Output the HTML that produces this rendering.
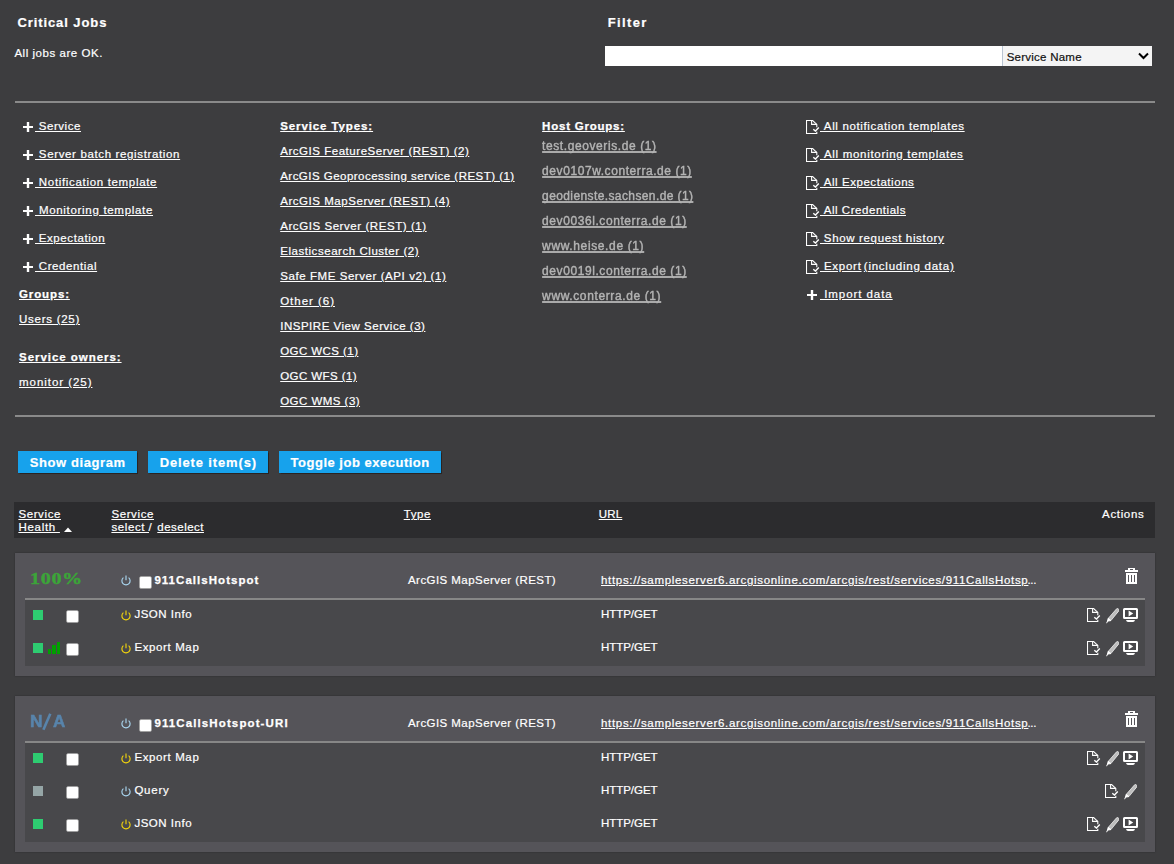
<!DOCTYPE html>
<html><head><meta charset="utf-8"><title>Dashboard</title>
<style>
html,body{margin:0;padding:0;}
body{width:1174px;height:864px;background:#3d3d3f;position:relative;overflow:hidden;font-family:"Liberation Sans",sans-serif;}
.t{position:absolute;white-space:pre;}
.r{position:absolute;display:block;}
</style></head><body>
<div class=r style='left:605px;top:46px;width:397px;height:20px;background:#fff;'></div><div class=r style='left:1002px;top:46px;width:150px;height:20px;background:#f4f4f4;box-shadow:inset 1px 0 0 #b9c4d2;'></div><div class=r style='left:15px;top:101px;width:1140px;height:2px;background:#8a8a8a;'></div><div class=r style='left:15px;top:415px;width:1140px;height:2px;background:#8a8a8a;'></div><div class=r style='left:18px;top:451px;width:119px;height:22px;background:#17a2ec;box-shadow:0 0 1px 0.5px rgba(30,20,15,.6);'></div><div class=r style='left:148px;top:451px;width:120px;height:22px;background:#17a2ec;box-shadow:0 0 1px 0.5px rgba(30,20,15,.6);'></div><div class=r style='left:279px;top:451px;width:162px;height:22px;background:#17a2ec;box-shadow:0 0 1px 0.5px rgba(30,20,15,.6);'></div><div class=r style='left:14px;top:502px;width:1141px;height:36px;background:#2c2c2e;'></div><div class=r style='left:15px;top:553px;width:1140px;height:123px;background:#555459;box-shadow:0 0 1.5px rgba(0,0,0,.35);'></div><div class=r style='left:25px;top:598px;width:1120px;height:2px;background:#878787;'></div><div class=r style='left:25px;top:600px;width:1120px;height:66px;background:#48484b;'></div><div class=r style='left:15px;top:696px;width:1140px;height:156px;background:#555459;box-shadow:0 0 1.5px rgba(0,0,0,.35);'></div><div class=r style='left:25px;top:741px;width:1120px;height:2px;background:#878787;'></div><div class=r style='left:25px;top:743px;width:1120px;height:99px;background:#48484b;'></div><div class=r style='left:33px;top:610px;width:10px;height:10px;background:#2ecc71;'></div><div class=r style='left:33px;top:643px;width:10px;height:10px;background:#2ecc71;'></div><div class=r style='left:48px;top:649px;width:3px;height:5px;background:#00a000;'></div><div class=r style='left:52px;top:645px;width:3.5px;height:9px;background:#00a000;'></div><div class=r style='left:57px;top:642px;width:3px;height:12px;background:#00a000;'></div><div class=r style='left:33px;top:753px;width:10px;height:10px;background:#2ecc71;'></div><div class=r style='left:33px;top:786px;width:10px;height:10px;background:#95a5a6;'></div><div class=r style='left:33px;top:819px;width:10px;height:10px;background:#2ecc71;'></div>
<svg class=r style='left:40px;top:713px' width='14' height='18' viewBox='0 0 14 18'><path d='M10.3,0.7L3.4,16.8' stroke='#5884ab' stroke-width='2.6'/></svg><svg class=r style='left:23px;top:122px' width='10' height='10' viewBox='0 0 10 10'><rect x='0' y='4' width='10' height='2' fill='#fff'/><rect x='3.8' y='0' width='2.4' height='10' fill='#fff'/></svg><svg class=r style='left:23px;top:150px' width='10' height='10' viewBox='0 0 10 10'><rect x='0' y='4' width='10' height='2' fill='#fff'/><rect x='3.8' y='0' width='2.4' height='10' fill='#fff'/></svg><svg class=r style='left:23px;top:178px' width='10' height='10' viewBox='0 0 10 10'><rect x='0' y='4' width='10' height='2' fill='#fff'/><rect x='3.8' y='0' width='2.4' height='10' fill='#fff'/></svg><svg class=r style='left:23px;top:206px' width='10' height='10' viewBox='0 0 10 10'><rect x='0' y='4' width='10' height='2' fill='#fff'/><rect x='3.8' y='0' width='2.4' height='10' fill='#fff'/></svg><svg class=r style='left:23px;top:234px' width='10' height='10' viewBox='0 0 10 10'><rect x='0' y='4' width='10' height='2' fill='#fff'/><rect x='3.8' y='0' width='2.4' height='10' fill='#fff'/></svg><svg class=r style='left:23px;top:262px' width='10' height='10' viewBox='0 0 10 10'><rect x='0' y='4' width='10' height='2' fill='#fff'/><rect x='3.8' y='0' width='2.4' height='10' fill='#fff'/></svg><svg class=r style='left:807px;top:290px' width='10' height='10' viewBox='0 0 10 10'><rect x='0' y='4' width='10' height='2' fill='#fff'/><rect x='3.8' y='0' width='2.4' height='10' fill='#fff'/></svg><svg class=r style='left:806px;top:120px' width='14' height='14' viewBox='0 0 14 14'><path d='M10.8,7.2V4.4L6.6,0.5H0.5V13.5H10.8V11.8' fill='none' stroke='#fff' stroke-width='1.1'/><path d='M5.6,0.5V4.4H10.8' fill='none' stroke='#fff' stroke-width='1.1'/><path d='M7.3,9.3L9.4,11.1L12.8,7.6' fill='none' stroke='#fff' stroke-width='1.4'/></svg><svg class=r style='left:806px;top:148px' width='14' height='14' viewBox='0 0 14 14'><path d='M10.8,7.2V4.4L6.6,0.5H0.5V13.5H10.8V11.8' fill='none' stroke='#fff' stroke-width='1.1'/><path d='M5.6,0.5V4.4H10.8' fill='none' stroke='#fff' stroke-width='1.1'/><path d='M7.3,9.3L9.4,11.1L12.8,7.6' fill='none' stroke='#fff' stroke-width='1.4'/></svg><svg class=r style='left:806px;top:176px' width='14' height='14' viewBox='0 0 14 14'><path d='M10.8,7.2V4.4L6.6,0.5H0.5V13.5H10.8V11.8' fill='none' stroke='#fff' stroke-width='1.1'/><path d='M5.6,0.5V4.4H10.8' fill='none' stroke='#fff' stroke-width='1.1'/><path d='M7.3,9.3L9.4,11.1L12.8,7.6' fill='none' stroke='#fff' stroke-width='1.4'/></svg><svg class=r style='left:806px;top:204px' width='14' height='14' viewBox='0 0 14 14'><path d='M10.8,7.2V4.4L6.6,0.5H0.5V13.5H10.8V11.8' fill='none' stroke='#fff' stroke-width='1.1'/><path d='M5.6,0.5V4.4H10.8' fill='none' stroke='#fff' stroke-width='1.1'/><path d='M7.3,9.3L9.4,11.1L12.8,7.6' fill='none' stroke='#fff' stroke-width='1.4'/></svg><svg class=r style='left:806px;top:232px' width='14' height='14' viewBox='0 0 14 14'><path d='M10.8,7.2V4.4L6.6,0.5H0.5V13.5H10.8V11.8' fill='none' stroke='#fff' stroke-width='1.1'/><path d='M5.6,0.5V4.4H10.8' fill='none' stroke='#fff' stroke-width='1.1'/><path d='M7.3,9.3L9.4,11.1L12.8,7.6' fill='none' stroke='#fff' stroke-width='1.4'/></svg><svg class=r style='left:806px;top:260px' width='14' height='14' viewBox='0 0 14 14'><path d='M10.8,7.2V4.4L6.6,0.5H0.5V13.5H10.8V11.8' fill='none' stroke='#fff' stroke-width='1.1'/><path d='M5.6,0.5V4.4H10.8' fill='none' stroke='#fff' stroke-width='1.1'/><path d='M7.3,9.3L9.4,11.1L12.8,7.6' fill='none' stroke='#fff' stroke-width='1.4'/></svg><svg class=r style='left:1125px;top:568px' width='13' height='16' viewBox='0 0 13 16'><path fill-rule='evenodd' fill='#fff' d='M3,0H10V2H13V4H0V2H3ZM5,1V2H8V1ZM1,5H12V16H1ZM3,7V14H4V7ZM6,7V14H7V7ZM9,7V14H10V7Z'/></svg><svg class=r style='left:121px;top:575px' width='10' height='11' viewBox='0 0 10 11'><path d='M2.4,2.6A4.1,4.1 0 1 0 7.6,2.6' fill='none' stroke='#a9d6f0' stroke-width='1.15'/><path d='M5,0.4V5.2' stroke='#a9d6f0' stroke-width='1.15'/></svg><svg class=r style='left:139px;top:576px' width='13' height='13' viewBox='0 0 13 13'><rect x='0.5' y='0.5' width='12' height='12' rx='1.5' fill='#fff' stroke='#9a9a9a' stroke-width='0.6'/></svg><svg class=r style='left:66px;top:610px' width='13' height='13' viewBox='0 0 13 13'><rect x='0.5' y='0.5' width='12' height='12' rx='1.5' fill='#fff' stroke='#9a9a9a' stroke-width='0.6'/></svg><svg class=r style='left:121px;top:609.8px' width='10' height='11' viewBox='0 0 10 11'><path d='M2.4,2.6A4.1,4.1 0 1 0 7.6,2.6' fill='none' stroke='#f2d40c' stroke-width='1.15'/><path d='M5,0.4V5.2' stroke='#f2d40c' stroke-width='1.15'/></svg><svg class=r style='left:1087px;top:608px' width='14' height='14' viewBox='0 0 14 14'><path d='M10.8,7.2V4.4L6.6,0.5H0.5V13.5H10.8V11.8' fill='none' stroke='#fff' stroke-width='1.1'/><path d='M5.6,0.5V4.4H10.8' fill='none' stroke='#fff' stroke-width='1.1'/><path d='M7.3,9.3L9.4,11.1L12.8,7.6' fill='none' stroke='#fff' stroke-width='1.4'/></svg><svg class=r style='left:1105.5px;top:608px' width='13' height='16' viewBox='0 0 13 16'><path d='M4.9,12.6L2.2,10.4L10.6,0.8Q11.4,0.1 12.3,0.8L12.9,1.4Q13.4,2.2 12.8,2.9Z' fill='#bdbdbd' stroke='#fff' stroke-width='0.7'/><path d='M4.9,12.6L2.2,10.4L1.4,13.2Z' fill='#fff' stroke='#fff' stroke-width='0.9'/><path d='M1.6,13L0.6,15.2' stroke='#fff' stroke-width='1'/></svg><svg class=r style='left:1123px;top:608px' width='15' height='14' viewBox='0 0 15 14'><path fill-rule='evenodd' fill='#fff' d='M1.5,0H13.5Q15,0 15,1.5V9.5Q15,11 13.5,11H1.5Q0,11 0,9.5V1.5Q0,0 1.5,0ZM2,2V9H13V2Z'/><path d='M5.6,2.6L10.2,5.5L5.6,8.6Z' fill='#fff'/><path d='M3,12H12Q11.5,14 10,14H5Q3.5,14 3,12Z' fill='#fff'/></svg><svg class=r style='left:66px;top:643px' width='13' height='13' viewBox='0 0 13 13'><rect x='0.5' y='0.5' width='12' height='12' rx='1.5' fill='#fff' stroke='#9a9a9a' stroke-width='0.6'/></svg><svg class=r style='left:121px;top:642.8px' width='10' height='11' viewBox='0 0 10 11'><path d='M2.4,2.6A4.1,4.1 0 1 0 7.6,2.6' fill='none' stroke='#f2d40c' stroke-width='1.15'/><path d='M5,0.4V5.2' stroke='#f2d40c' stroke-width='1.15'/></svg><svg class=r style='left:1087px;top:641px' width='14' height='14' viewBox='0 0 14 14'><path d='M10.8,7.2V4.4L6.6,0.5H0.5V13.5H10.8V11.8' fill='none' stroke='#fff' stroke-width='1.1'/><path d='M5.6,0.5V4.4H10.8' fill='none' stroke='#fff' stroke-width='1.1'/><path d='M7.3,9.3L9.4,11.1L12.8,7.6' fill='none' stroke='#fff' stroke-width='1.4'/></svg><svg class=r style='left:1105.5px;top:641px' width='13' height='16' viewBox='0 0 13 16'><path d='M4.9,12.6L2.2,10.4L10.6,0.8Q11.4,0.1 12.3,0.8L12.9,1.4Q13.4,2.2 12.8,2.9Z' fill='#bdbdbd' stroke='#fff' stroke-width='0.7'/><path d='M4.9,12.6L2.2,10.4L1.4,13.2Z' fill='#fff' stroke='#fff' stroke-width='0.9'/><path d='M1.6,13L0.6,15.2' stroke='#fff' stroke-width='1'/></svg><svg class=r style='left:1123px;top:641px' width='15' height='14' viewBox='0 0 15 14'><path fill-rule='evenodd' fill='#fff' d='M1.5,0H13.5Q15,0 15,1.5V9.5Q15,11 13.5,11H1.5Q0,11 0,9.5V1.5Q0,0 1.5,0ZM2,2V9H13V2Z'/><path d='M5.6,2.6L10.2,5.5L5.6,8.6Z' fill='#fff'/><path d='M3,12H12Q11.5,14 10,14H5Q3.5,14 3,12Z' fill='#fff'/></svg><svg class=r style='left:1125px;top:711px' width='13' height='16' viewBox='0 0 13 16'><path fill-rule='evenodd' fill='#fff' d='M3,0H10V2H13V4H0V2H3ZM5,1V2H8V1ZM1,5H12V16H1ZM3,7V14H4V7ZM6,7V14H7V7ZM9,7V14H10V7Z'/></svg><svg class=r style='left:121px;top:718px' width='10' height='11' viewBox='0 0 10 11'><path d='M2.4,2.6A4.1,4.1 0 1 0 7.6,2.6' fill='none' stroke='#a9d6f0' stroke-width='1.15'/><path d='M5,0.4V5.2' stroke='#a9d6f0' stroke-width='1.15'/></svg><svg class=r style='left:139px;top:719px' width='13' height='13' viewBox='0 0 13 13'><rect x='0.5' y='0.5' width='12' height='12' rx='1.5' fill='#fff' stroke='#9a9a9a' stroke-width='0.6'/></svg><svg class=r style='left:66px;top:753px' width='13' height='13' viewBox='0 0 13 13'><rect x='0.5' y='0.5' width='12' height='12' rx='1.5' fill='#fff' stroke='#9a9a9a' stroke-width='0.6'/></svg><svg class=r style='left:121px;top:752.8px' width='10' height='11' viewBox='0 0 10 11'><path d='M2.4,2.6A4.1,4.1 0 1 0 7.6,2.6' fill='none' stroke='#f2d40c' stroke-width='1.15'/><path d='M5,0.4V5.2' stroke='#f2d40c' stroke-width='1.15'/></svg><svg class=r style='left:1087px;top:751px' width='14' height='14' viewBox='0 0 14 14'><path d='M10.8,7.2V4.4L6.6,0.5H0.5V13.5H10.8V11.8' fill='none' stroke='#fff' stroke-width='1.1'/><path d='M5.6,0.5V4.4H10.8' fill='none' stroke='#fff' stroke-width='1.1'/><path d='M7.3,9.3L9.4,11.1L12.8,7.6' fill='none' stroke='#fff' stroke-width='1.4'/></svg><svg class=r style='left:1105.5px;top:751px' width='13' height='16' viewBox='0 0 13 16'><path d='M4.9,12.6L2.2,10.4L10.6,0.8Q11.4,0.1 12.3,0.8L12.9,1.4Q13.4,2.2 12.8,2.9Z' fill='#bdbdbd' stroke='#fff' stroke-width='0.7'/><path d='M4.9,12.6L2.2,10.4L1.4,13.2Z' fill='#fff' stroke='#fff' stroke-width='0.9'/><path d='M1.6,13L0.6,15.2' stroke='#fff' stroke-width='1'/></svg><svg class=r style='left:1123px;top:751px' width='15' height='14' viewBox='0 0 15 14'><path fill-rule='evenodd' fill='#fff' d='M1.5,0H13.5Q15,0 15,1.5V9.5Q15,11 13.5,11H1.5Q0,11 0,9.5V1.5Q0,0 1.5,0ZM2,2V9H13V2Z'/><path d='M5.6,2.6L10.2,5.5L5.6,8.6Z' fill='#fff'/><path d='M3,12H12Q11.5,14 10,14H5Q3.5,14 3,12Z' fill='#fff'/></svg><svg class=r style='left:66px;top:786px' width='13' height='13' viewBox='0 0 13 13'><rect x='0.5' y='0.5' width='12' height='12' rx='1.5' fill='#fff' stroke='#9a9a9a' stroke-width='0.6'/></svg><svg class=r style='left:121px;top:785.8px' width='10' height='11' viewBox='0 0 10 11'><path d='M2.4,2.6A4.1,4.1 0 1 0 7.6,2.6' fill='none' stroke='#a9d6f0' stroke-width='1.15'/><path d='M5,0.4V5.2' stroke='#a9d6f0' stroke-width='1.15'/></svg><svg class=r style='left:1105px;top:784px' width='14' height='14' viewBox='0 0 14 14'><path d='M10.8,7.2V4.4L6.6,0.5H0.5V13.5H10.8V11.8' fill='none' stroke='#fff' stroke-width='1.1'/><path d='M5.6,0.5V4.4H10.8' fill='none' stroke='#fff' stroke-width='1.1'/><path d='M7.3,9.3L9.4,11.1L12.8,7.6' fill='none' stroke='#fff' stroke-width='1.4'/></svg><svg class=r style='left:1123.5px;top:784px' width='13' height='16' viewBox='0 0 13 16'><path d='M4.9,12.6L2.2,10.4L10.6,0.8Q11.4,0.1 12.3,0.8L12.9,1.4Q13.4,2.2 12.8,2.9Z' fill='#bdbdbd' stroke='#fff' stroke-width='0.7'/><path d='M4.9,12.6L2.2,10.4L1.4,13.2Z' fill='#fff' stroke='#fff' stroke-width='0.9'/><path d='M1.6,13L0.6,15.2' stroke='#fff' stroke-width='1'/></svg><svg class=r style='left:66px;top:819px' width='13' height='13' viewBox='0 0 13 13'><rect x='0.5' y='0.5' width='12' height='12' rx='1.5' fill='#fff' stroke='#9a9a9a' stroke-width='0.6'/></svg><svg class=r style='left:121px;top:818.8px' width='10' height='11' viewBox='0 0 10 11'><path d='M2.4,2.6A4.1,4.1 0 1 0 7.6,2.6' fill='none' stroke='#f2d40c' stroke-width='1.15'/><path d='M5,0.4V5.2' stroke='#f2d40c' stroke-width='1.15'/></svg><svg class=r style='left:1087px;top:817px' width='14' height='14' viewBox='0 0 14 14'><path d='M10.8,7.2V4.4L6.6,0.5H0.5V13.5H10.8V11.8' fill='none' stroke='#fff' stroke-width='1.1'/><path d='M5.6,0.5V4.4H10.8' fill='none' stroke='#fff' stroke-width='1.1'/><path d='M7.3,9.3L9.4,11.1L12.8,7.6' fill='none' stroke='#fff' stroke-width='1.4'/></svg><svg class=r style='left:1105.5px;top:817px' width='13' height='16' viewBox='0 0 13 16'><path d='M4.9,12.6L2.2,10.4L10.6,0.8Q11.4,0.1 12.3,0.8L12.9,1.4Q13.4,2.2 12.8,2.9Z' fill='#bdbdbd' stroke='#fff' stroke-width='0.7'/><path d='M4.9,12.6L2.2,10.4L1.4,13.2Z' fill='#fff' stroke='#fff' stroke-width='0.9'/><path d='M1.6,13L0.6,15.2' stroke='#fff' stroke-width='1'/></svg><svg class=r style='left:1123px;top:817px' width='15' height='14' viewBox='0 0 15 14'><path fill-rule='evenodd' fill='#fff' d='M1.5,0H13.5Q15,0 15,1.5V9.5Q15,11 13.5,11H1.5Q0,11 0,9.5V1.5Q0,0 1.5,0ZM2,2V9H13V2Z'/><path d='M5.6,2.6L10.2,5.5L5.6,8.6Z' fill='#fff'/><path d='M3,12H12Q11.5,14 10,14H5Q3.5,14 3,12Z' fill='#fff'/></svg><svg class=r style='left:64px;top:527px' width='8' height='5' viewBox='0 0 8 5'><path d='M0,5L4,0.5L8,5Z' fill='#fff'/></svg><svg class=r style='left:1138px;top:52px' width='11' height='8' viewBox='0 0 11 8'><path d='M1,1.5L5.5,6L10,1.5' fill='none' stroke='#000' stroke-width='2'/></svg>
<div class=t style="left:17.40px;top:15px;font:700 13px/15px 'Liberation Sans';letter-spacing:0.914px;color:#fff;-webkit-text-stroke-width:0.2px;">Critical Jobs</div>
<div class=t style="left:14.40px;top:47px;font:400 11.5px/13px 'Liberation Sans';letter-spacing:0.540px;color:#fff;-webkit-text-stroke-width:0.2px;">All jobs are OK.</div>
<div class=t style="left:607.80px;top:15px;font:700 13px/15px 'Liberation Sans';letter-spacing:1.361px;color:#fff;-webkit-text-stroke-width:0.2px;">Filter</div>
<div class=t style="left:1006.70px;top:51px;font:400 11.5px/13px 'Liberation Sans';letter-spacing:0.244px;color:#111;-webkit-text-stroke-width:0.2px;">Service Name</div>
<div class=t style="left:35.00px;top:120px;font:400 11.5px/13px 'Liberation Sans';letter-spacing:0.554px;color:#fff;text-decoration:underline;-webkit-text-stroke-width:0.2px;"> Service</div>
<div class=t style="left:35.00px;top:148px;font:400 11.5px/13px 'Liberation Sans';letter-spacing:0.640px;color:#fff;text-decoration:underline;-webkit-text-stroke-width:0.2px;"> Server batch registration</div>
<div class=t style="left:35.00px;top:176px;font:400 11.5px/13px 'Liberation Sans';letter-spacing:0.670px;color:#fff;text-decoration:underline;-webkit-text-stroke-width:0.2px;"> Notification template</div>
<div class=t style="left:35.00px;top:204px;font:400 11.5px/13px 'Liberation Sans';letter-spacing:0.692px;color:#fff;text-decoration:underline;-webkit-text-stroke-width:0.2px;"> Monitoring template</div>
<div class=t style="left:35.00px;top:232px;font:400 11.5px/13px 'Liberation Sans';letter-spacing:0.583px;color:#fff;text-decoration:underline;-webkit-text-stroke-width:0.2px;"> Expectation</div>
<div class=t style="left:35.00px;top:260px;font:400 11.5px/13px 'Liberation Sans';letter-spacing:0.588px;color:#fff;text-decoration:underline;-webkit-text-stroke-width:0.2px;"> Credential</div>
<div class=t style="left:19.00px;top:288px;font:700 11.5px/13px 'Liberation Sans';letter-spacing:0.878px;color:#fff;text-decoration:underline;-webkit-text-stroke-width:0.25px;">Groups:</div>
<div class=t style="left:19.00px;top:313px;font:400 11.5px/13px 'Liberation Sans';letter-spacing:0.735px;color:#fff;text-decoration:underline;-webkit-text-stroke-width:0.2px;">Users (25)</div>
<div class=t style="left:19.00px;top:351px;font:700 11.5px/13px 'Liberation Sans';letter-spacing:0.956px;color:#fff;text-decoration:underline;-webkit-text-stroke-width:0.25px;">Service owners:</div>
<div class=t style="left:19.00px;top:376px;font:400 11.5px/13px 'Liberation Sans';letter-spacing:0.955px;color:#fff;text-decoration:underline;-webkit-text-stroke-width:0.2px;">monitor (25)</div>
<div class=t style="left:280.20px;top:120px;font:700 11.5px/13px 'Liberation Sans';letter-spacing:0.897px;color:#fff;text-decoration:underline;-webkit-text-stroke-width:0.25px;">Service Types:</div>
<div class=t style="left:280.20px;top:145px;font:400 11.5px/13px 'Liberation Sans';letter-spacing:0.535px;color:#fff;text-decoration:underline;-webkit-text-stroke-width:0.2px;">ArcGIS FeatureServer (REST) (2)</div>
<div class=t style="left:280.20px;top:170px;font:400 11.5px/13px 'Liberation Sans';letter-spacing:0.473px;color:#fff;text-decoration:underline;-webkit-text-stroke-width:0.2px;">ArcGIS Geoprocessing service (REST) (1)</div>
<div class=t style="left:280.20px;top:195px;font:400 11.5px/13px 'Liberation Sans';letter-spacing:0.543px;color:#fff;text-decoration:underline;-webkit-text-stroke-width:0.2px;">ArcGIS MapServer (REST) (4)</div>
<div class=t style="left:280.20px;top:220px;font:400 11.5px/13px 'Liberation Sans';letter-spacing:0.565px;color:#fff;text-decoration:underline;-webkit-text-stroke-width:0.2px;">ArcGIS Server (REST) (1)</div>
<div class=t style="left:280.20px;top:245px;font:400 11.5px/13px 'Liberation Sans';letter-spacing:0.547px;color:#fff;text-decoration:underline;-webkit-text-stroke-width:0.2px;">Elasticsearch Cluster (2)</div>
<div class=t style="left:280.20px;top:270px;font:400 11.5px/13px 'Liberation Sans';letter-spacing:0.571px;color:#fff;text-decoration:underline;-webkit-text-stroke-width:0.2px;">Safe FME Server (API v2) (1)</div>
<div class=t style="left:280.20px;top:295px;font:400 11.5px/13px 'Liberation Sans';letter-spacing:0.973px;color:#fff;text-decoration:underline;-webkit-text-stroke-width:0.2px;">Other (6)</div>
<div class=t style="left:280.20px;top:320px;font:400 11.5px/13px 'Liberation Sans';letter-spacing:0.521px;color:#fff;text-decoration:underline;-webkit-text-stroke-width:0.2px;">INSPIRE View Service (3)</div>
<div class=t style="left:280.20px;top:345px;font:400 11.5px/13px 'Liberation Sans';letter-spacing:0.432px;color:#fff;text-decoration:underline;-webkit-text-stroke-width:0.2px;">OGC WCS (1)</div>
<div class=t style="left:280.20px;top:370px;font:400 11.5px/13px 'Liberation Sans';letter-spacing:0.420px;color:#fff;text-decoration:underline;-webkit-text-stroke-width:0.2px;">OGC WFS (1)</div>
<div class=t style="left:280.20px;top:395px;font:400 11.5px/13px 'Liberation Sans';letter-spacing:0.465px;color:#fff;text-decoration:underline;-webkit-text-stroke-width:0.2px;">OGC WMS (3)</div>
<div class=t style="left:542.10px;top:120px;font:700 11.5px/13px 'Liberation Sans';letter-spacing:0.774px;color:#fff;text-decoration:underline;-webkit-text-stroke-width:0.25px;">Host Groups:</div>
<div class=t style="left:542.10px;top:139px;font:400 12px/14px 'Liberation Sans';letter-spacing:0.588px;color:#b4b4b4;text-decoration:underline;filter:blur(0.4px);-webkit-text-stroke:0.4px #b4b4b4;text-decoration-thickness:2px;text-decoration-color:#aaa;text-decoration-skip-ink:none;">test.geoveris.de (1)</div>
<div class=t style="left:542.10px;top:164px;font:400 12px/14px 'Liberation Sans';letter-spacing:0.570px;color:#b4b4b4;text-decoration:underline;filter:blur(0.4px);-webkit-text-stroke:0.4px #b4b4b4;text-decoration-thickness:2px;text-decoration-color:#aaa;text-decoration-skip-ink:none;">dev0107w.conterra.de (1)</div>
<div class=t style="left:542.10px;top:189px;font:400 12px/14px 'Liberation Sans';letter-spacing:0.394px;color:#b4b4b4;text-decoration:underline;filter:blur(0.4px);-webkit-text-stroke:0.4px #b4b4b4;text-decoration-thickness:2px;text-decoration-color:#aaa;text-decoration-skip-ink:none;">geodienste.sachsen.de (1)</div>
<div class=t style="left:542.10px;top:214px;font:400 12px/14px 'Liberation Sans';letter-spacing:0.580px;color:#b4b4b4;text-decoration:underline;filter:blur(0.4px);-webkit-text-stroke:0.4px #b4b4b4;text-decoration-thickness:2px;text-decoration-color:#aaa;text-decoration-skip-ink:none;">dev0036l.conterra.de (1)</div>
<div class=t style="left:542.10px;top:239px;font:400 12px/14px 'Liberation Sans';letter-spacing:0.630px;color:#b4b4b4;text-decoration:underline;filter:blur(0.4px);-webkit-text-stroke:0.4px #b4b4b4;text-decoration-thickness:2px;text-decoration-color:#aaa;text-decoration-skip-ink:none;">www.heise.de (1)</div>
<div class=t style="left:542.10px;top:264px;font:400 12px/14px 'Liberation Sans';letter-spacing:0.580px;color:#b4b4b4;text-decoration:underline;filter:blur(0.4px);-webkit-text-stroke:0.4px #b4b4b4;text-decoration-thickness:2px;text-decoration-color:#aaa;text-decoration-skip-ink:none;">dev0019l.conterra.de (1)</div>
<div class=t style="left:542.10px;top:289px;font:400 12px/14px 'Liberation Sans';letter-spacing:0.618px;color:#b4b4b4;text-decoration:underline;filter:blur(0.4px);-webkit-text-stroke:0.4px #b4b4b4;text-decoration-thickness:2px;text-decoration-color:#aaa;text-decoration-skip-ink:none;">www.conterra.de (1)</div>
<div class=t style="left:820.00px;top:120px;font:400 11.5px/13px 'Liberation Sans';letter-spacing:0.645px;color:#fff;text-decoration:underline;-webkit-text-stroke-width:0.2px;"> All notification templates</div>
<div class=t style="left:820.00px;top:148px;font:400 11.5px/13px 'Liberation Sans';letter-spacing:0.705px;color:#fff;text-decoration:underline;-webkit-text-stroke-width:0.2px;"> All monitoring templates</div>
<div class=t style="left:820.00px;top:176px;font:400 11.5px/13px 'Liberation Sans';letter-spacing:0.551px;color:#fff;text-decoration:underline;-webkit-text-stroke-width:0.2px;"> All Expectations</div>
<div class=t style="left:820.00px;top:204px;font:400 11.5px/13px 'Liberation Sans';letter-spacing:0.539px;color:#fff;text-decoration:underline;-webkit-text-stroke-width:0.2px;"> All Credentials</div>
<div class=t style="left:820.00px;top:232px;font:400 11.5px/13px 'Liberation Sans';letter-spacing:0.654px;color:#fff;text-decoration:underline;-webkit-text-stroke-width:0.2px;"> Show request history</div>
<div class=t style="left:820.00px;top:260px;font:400 11.5px/13px 'Liberation Sans';letter-spacing:0.733px;color:#fff;text-decoration:underline;-webkit-text-stroke-width:0.2px;"> Export</div>
<div class=t style="left:820.00px;top:288px;font:400 11.5px/13px 'Liberation Sans';letter-spacing:0.941px;color:#fff;text-decoration:underline;-webkit-text-stroke-width:0.2px;"> Import data</div>
<div class=t style="left:863.80px;top:260px;font:400 11.5px/13px 'Liberation Sans';letter-spacing:0.757px;color:#fff;text-decoration:underline;-webkit-text-stroke-width:0.2px;">(including data)</div>
<div class=t style="left:29.65px;top:455px;font:700 13px/15px 'Liberation Sans';letter-spacing:0.604px;color:#fff;-webkit-text-stroke-width:0.2px;">Show diagram</div>
<div class=t style="left:159.70px;top:455px;font:700 13px/15px 'Liberation Sans';letter-spacing:0.858px;color:#fff;-webkit-text-stroke-width:0.2px;">Delete item(s)</div>
<div class=t style="left:290.55px;top:455px;font:700 13px/15px 'Liberation Sans';letter-spacing:0.508px;color:#fff;-webkit-text-stroke-width:0.2px;">Toggle job execution</div>
<div class=t style="left:18.40px;top:508px;font:400 11.5px/13px 'Liberation Sans';letter-spacing:0.607px;color:#fff;text-decoration:underline;-webkit-text-stroke-width:0.2px;">Service</div>
<div class=t style="left:18.40px;top:521px;font:400 11.5px/13px 'Liberation Sans';letter-spacing:0.725px;color:#fff;text-decoration:underline;-webkit-text-stroke-width:0.2px;">Health </div>
<div class=t style="left:111.40px;top:508px;font:400 11.5px/13px 'Liberation Sans';letter-spacing:0.607px;color:#fff;text-decoration:underline;-webkit-text-stroke-width:0.2px;">Service</div>
<div class=t style="left:111.40px;top:521px;font:400 11.5px/13px 'Liberation Sans';letter-spacing:0.622px;color:#fff;text-decoration:underline;-webkit-text-stroke-width:0.2px;">select </div>
<div class=t style="left:148.60px;top:521px;font:400 11.5px/13px 'Liberation Sans';letter-spacing:1.797px;color:#fff;-webkit-text-stroke-width:0.2px;">/</div>
<div class=t style="left:157.30px;top:521px;font:400 11.5px/13px 'Liberation Sans';letter-spacing:0.479px;color:#fff;text-decoration:underline;-webkit-text-stroke-width:0.2px;">deselect</div>
<div class=t style="left:403.70px;top:508px;font:400 11.5px/13px 'Liberation Sans';letter-spacing:0.587px;color:#fff;text-decoration:underline;-webkit-text-stroke-width:0.2px;">Type</div>
<div class=t style="left:598.70px;top:508px;font:400 11.5px/13px 'Liberation Sans';letter-spacing:0.192px;color:#fff;text-decoration:underline;-webkit-text-stroke-width:0.2px;">URL</div>
<div class=t style="left:1102.10px;top:508px;font:400 11.5px/13px 'Liberation Sans';letter-spacing:0.647px;color:#fff;-webkit-text-stroke-width:0.2px;">Actions</div>
<div class=t style="left:30.40px;top:569px;font:700 17.5px/19px 'Liberation Serif';letter-spacing:0.547px;color:#3da43a;-webkit-text-stroke-width:0.5px;transform:scaleX(1.15);transform-origin:0 0;">100%</div>
<div class=t style="left:154.40px;top:574px;font:700 11.5px/13px 'Liberation Sans';letter-spacing:1.037px;color:#fff;-webkit-text-stroke-width:0.25px;">911CallsHotspot</div>
<div class=t style="left:408.00px;top:574px;font:400 11.5px/13px 'Liberation Sans';letter-spacing:0.439px;color:#fff;-webkit-text-stroke-width:0.2px;">ArcGIS MapServer (REST)</div>
<div class=t style="left:601.00px;top:574px;font:400 11.5px/13px 'Liberation Sans';letter-spacing:0.675px;color:#fff;text-decoration:underline;-webkit-text-stroke-width:0.2px;">https://sampleserver6.arcgisonline.com/arcgis/rest/services/911CallsHotsp</div>
<div class=t style="left:1027.40px;top:574px;font:400 11.5px/13px 'Liberation Sans';letter-spacing:-0.297px;color:#fff;-webkit-text-stroke-width:0.2px;">...</div>
<div class=t style="left:134.40px;top:608px;font:400 11.5px/13px 'Liberation Sans';letter-spacing:0.517px;color:#fff;-webkit-text-stroke-width:0.2px;">JSON Info</div>
<div class=t style="left:601.00px;top:608px;font:400 11.5px/13px 'Liberation Sans';letter-spacing:-0.039px;color:#fff;-webkit-text-stroke-width:0.2px;">HTTP/GET</div>
<div class=t style="left:134.40px;top:641px;font:400 11.5px/13px 'Liberation Sans';letter-spacing:0.621px;color:#fff;-webkit-text-stroke-width:0.2px;">Export Map</div>
<div class=t style="left:601.00px;top:641px;font:400 11.5px/13px 'Liberation Sans';letter-spacing:-0.039px;color:#fff;-webkit-text-stroke-width:0.2px;">HTTP/GET</div>
<div class=t style="left:29.90px;top:713px;font:700 16px/18px 'Liberation Sans';letter-spacing:0.000px;color:#5884ab;-webkit-text-stroke-width:0.5px;transform:scaleX(1.08);transform-origin:0 0;">N</div>
<div class=t style="left:52.80px;top:713px;font:700 16px/18px 'Liberation Sans';letter-spacing:0.000px;color:#5884ab;-webkit-text-stroke-width:0.5px;transform:scaleX(1.06);transform-origin:0 0;">A</div>
<div class=t style="left:154.40px;top:717px;font:700 11.5px/13px 'Liberation Sans';letter-spacing:1.116px;color:#fff;-webkit-text-stroke-width:0.25px;">911CallsHotspot-URI</div>
<div class=t style="left:408.00px;top:717px;font:400 11.5px/13px 'Liberation Sans';letter-spacing:0.439px;color:#fff;-webkit-text-stroke-width:0.2px;">ArcGIS MapServer (REST)</div>
<div class=t style="left:601.00px;top:717px;font:400 11.5px/13px 'Liberation Sans';letter-spacing:0.675px;color:#fff;text-decoration:underline;-webkit-text-stroke-width:0.2px;">https://sampleserver6.arcgisonline.com/arcgis/rest/services/911CallsHotsp</div>
<div class=t style="left:1027.40px;top:717px;font:400 11.5px/13px 'Liberation Sans';letter-spacing:-0.297px;color:#fff;-webkit-text-stroke-width:0.2px;">...</div>
<div class=t style="left:134.40px;top:751px;font:400 11.5px/13px 'Liberation Sans';letter-spacing:0.621px;color:#fff;-webkit-text-stroke-width:0.2px;">Export Map</div>
<div class=t style="left:601.00px;top:751px;font:400 11.5px/13px 'Liberation Sans';letter-spacing:-0.039px;color:#fff;-webkit-text-stroke-width:0.2px;">HTTP/GET</div>
<div class=t style="left:134.40px;top:784px;font:400 11.5px/13px 'Liberation Sans';letter-spacing:0.768px;color:#fff;-webkit-text-stroke-width:0.2px;">Query</div>
<div class=t style="left:601.00px;top:784px;font:400 11.5px/13px 'Liberation Sans';letter-spacing:-0.039px;color:#fff;-webkit-text-stroke-width:0.2px;">HTTP/GET</div>
<div class=t style="left:134.40px;top:817px;font:400 11.5px/13px 'Liberation Sans';letter-spacing:0.517px;color:#fff;-webkit-text-stroke-width:0.2px;">JSON Info</div>
<div class=t style="left:601.00px;top:817px;font:400 11.5px/13px 'Liberation Sans';letter-spacing:-0.039px;color:#fff;-webkit-text-stroke-width:0.2px;">HTTP/GET</div>
</body></html>
